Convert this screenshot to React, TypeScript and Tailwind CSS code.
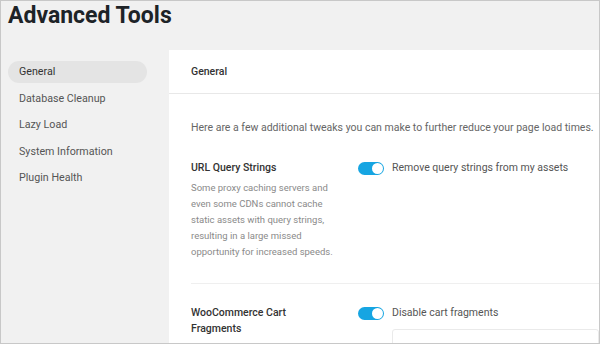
import React from "react";

function Toggle() {
  return (
    <div className="relative w-[26px] h-[13px] rounded-full bg-[#16a5e2] shrink-0">
      <div className="absolute right-[1px] top-[1px] w-[11px] h-[11px] rounded-full bg-white" />
    </div>
  );
}

export default function App() {
  const items = ["General", "Database Cleanup", "Lazy Load", "System Information", "Plugin Health"];
  return (
    <div
      className="w-[600px] h-[344px] overflow-hidden bg-[#f1f1f1] border border-[#c8c8c8] flex flex-col"
      style={{ fontFamily: "Roboto, 'Liberation Sans', sans-serif" }}
    >
      <h1 className="shrink-0 px-[7px] pt-[1px] h-[49px] text-[23px] font-bold text-[#1d2327] leading-[28px]">Advanced Tools</h1>
      <div className="flex flex-1 min-h-0">
        <nav className="w-[168px] shrink-0 pl-[7px] pr-[22px] pt-[11px] flex flex-col gap-[4.6px]">
          {items.map((it, i) => (
            <div
              key={it}
              className={`h-[22px] shrink-0 rounded-full pl-[11px] flex items-center text-[10.7px] ${
                i === 0 ? "bg-[#e4e4e4] text-[#333]" : "text-[#555]"
              }`}
            >
              {it}
            </div>
          ))}
        </nav>
        <main className="flex-1 bg-white flex flex-col">
          <div className="h-[44px] shrink-0 border-b border-[#e8e8e8] pl-[22px] pt-[1px] flex items-center text-[10.5px] font-medium text-[#333]">
            General
          </div>
          <div className="pl-[22px] pt-[26px]">
            <p className="text-[10.5px] text-[#666] leading-[16px] whitespace-nowrap">
              Here are a few additional tweaks you can make to further reduce your page load times.
            </p>
            <div className="flex pt-[24px] pb-[23px] border-b border-[#efefef]">
              <div className="w-[167px] shrink-0 pr-2">
                <div className="text-[10.5px] font-medium text-[#333] leading-[16px]">URL Query Strings</div>
                <p className="mt-[4px] w-[145px] text-[9.5px] text-[#8a8a8a] leading-[16px]">
                  Some proxy caching servers and even some CDNs cannot cache static assets with query strings, resulting in a large missed opportunity for increased speeds.
                </p>
              </div>
              <div className="flex items-start gap-2">
                <div className="pt-[2px]"><Toggle /></div>
                <span className="text-[10.5px] text-[#555] leading-[16px]">Remove query strings from my assets</span>
              </div>
            </div>
            <div className="flex pt-[21px]">
              <div className="w-[167px] shrink-0 pr-2">
                <div className="text-[10.5px] font-medium text-[#333] leading-[16px] w-[110px]">WooCommerce Cart Fragments</div>
              </div>
              <div className="flex-1 flex flex-col">
                <div className="flex items-start gap-2">
                  <div className="pt-[2px]"><Toggle /></div>
                  <span className="text-[10.5px] text-[#555] leading-[16px]">Disable cart fragments</span>
                </div>
                <div className="ml-[34px] mt-[8px] h-[40px] border border-[#eaeaea] rounded-[3px] shrink-0" />
              </div>
            </div>
          </div>
        </main>
      </div>
    </div>
  );
}
